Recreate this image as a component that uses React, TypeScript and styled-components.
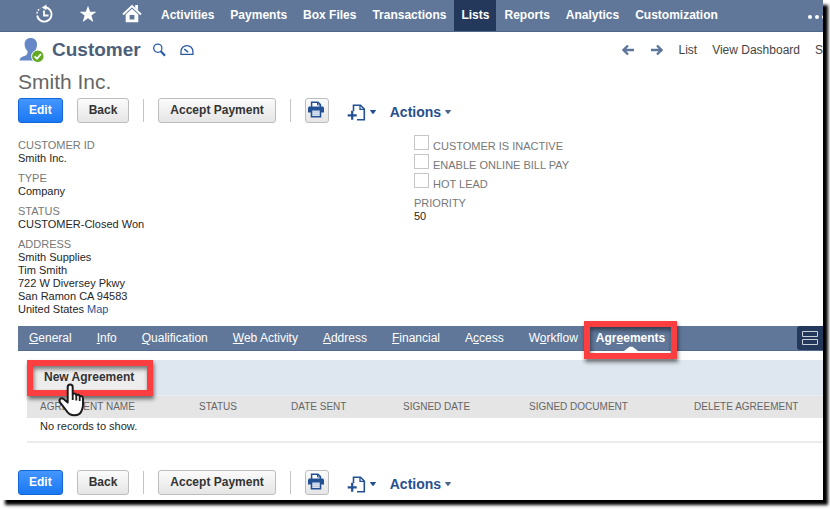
import React from "react";
import styled, { createGlobalStyle } from "styled-components";

const Global = createGlobalStyle`
  * { box-sizing: border-box; }
  body {
    margin: 0;
    background: #fff;
    font-family: "Liberation Sans", Arial, sans-serif;
    font-size: 11px;
    line-height: 13px;
    color: #262626;
  }
  button { font-family: inherit; cursor: pointer; }
  a { text-decoration: none; }
`;

const Window = styled.div`
  margin: 0 7px 9px 0;
  padding-bottom: 5px;
  background: #fff;
  box-shadow: 5px 5px 3px #000;
`;

const TopNav = styled.nav`
  display: flex;
  align-items: stretch;
  gap: 2px;
  height: 32px;
  overflow: hidden;
  background: #607799;
  border-bottom: 1px solid #4e678d;
`;

const NavIcons = styled.div`
  display: flex;
  align-items: center;
  gap: 24px;
  padding: 0 10px 4px 34px;
`;

const IconLink = styled.a`
  display: flex;
  color: #fff;
`;

const NavLink = styled.a<{ $active?: boolean }>`
  margin: 0 ${(p) => (p.$active ? "-1px" : "0")};
  padding: 8px 7px 0;
  font-size: 12px;
  line-height: 15px;
  font-weight: bold;
  white-space: nowrap;
  color: #fff;
  background: ${(p) => (p.$active ? "#24385b" : "transparent")};
`;

const MoreButton = styled.button`
  display: flex;
  align-items: center;
  margin-left: auto;
  padding: 2px 0 0;
  border: 0;
  background: none;
`;

const TitleRow = styled.header`
  display: flex;
  align-items: center;
  height: 36px;
  padding-left: 18px;
`;

const Title = styled.h1`
  margin: 0 12px 0 8px;
  font-size: 19px;
  line-height: 24px;
  color: #4d5f79;
`;

const TitleTools = styled.div`
  display: flex;
  align-items: center;
  gap: 14px;
`;

const PageLinks = styled.div`
  display: flex;
  align-items: center;
  gap: 15px;
  margin-left: auto;
  font-size: 12px;
  line-height: 14px;
  white-space: nowrap;
`;

const Pager = styled.div`
  display: flex;
  gap: 17px;
`;

const PageLink = styled.a`
  color: #444;
`;

const RecordName = styled.h2`
  margin: 0;
  padding: 2px 18px 4px;
  font-size: 21px;
  line-height: 24px;
  font-weight: normal;
  color: #666;
`;

const Toolbar = styled.div`
  display: flex;
  align-items: center;
  gap: 14px;
  height: 25px;
  padding-left: 18px;
`;

const Button = styled.button<{ $primary?: boolean }>`
  height: 25px;
  padding: 0 ${(p) => (p.$primary ? "10px" : "11px")};
  border: 1px solid ${(p) => (p.$primary ? "#1465d6" : "#bdbdbd")};
  border-radius: 3px;
  font-size: 12px;
  line-height: 15px;
  font-weight: bold;
  white-space: nowrap;
  color: ${(p) => (p.$primary ? "#fff" : "#333")};
  background: ${(p) =>
    p.$primary
      ? "linear-gradient(#4496ff, #1a78f2)"
      : "linear-gradient(#fbfbfb, #e5e5e5)"};
`;

const IconButton = styled(Button)`
  display: flex;
  align-items: center;
  justify-content: center;
  width: 24px;
  padding: 0 2px 2px 0;
`;

const Separator = styled.span`
  width: 1px;
  height: 23px;
  background: #c4c4c4;
`;

const MenuButton = styled.button`
  display: flex;
  align-items: center;
  gap: 3px;
  padding: 3px 0 0;
  border: 0;
  background: none;
  font-size: 14px;
  line-height: 18px;
  font-weight: bold;
  color: #27508e;
`;

const Details = styled.section`
  display: grid;
  grid-template-columns: 1fr 1fr;
  padding: 16px 13px 10px 18px;
`;

const FieldList = styled.dl`
  display: flex;
  flex-direction: column;
  gap: 7px;
  margin: 0;
`;

const FieldLabel = styled.dt`
  color: #777;
`;

const FieldValue = styled.dd`
  margin: 0;
`;

const MapLink = styled.a`
  color: #255599;
`;

const CheckList = styled.div`
  margin: -4px 0 5px;
`;

const CheckLabel = styled.label`
  display: flex;
  align-items: flex-start;
  gap: 4px;
  height: 19px;
  color: #777;

  span {
    padding-top: 5px;
  }
`;

const CheckBox = styled.input`
  appearance: none;
  width: 15px;
  height: 15px;
  margin: 0;
  border: 1px solid #c6c6c6;
  background: #fff;
`;

const TabBar = styled.div`
  display: flex;
  align-items: stretch;
  gap: 3px;
  height: 25px;
  margin-left: 18px;
  background: #607799;
  border-bottom: 1px solid #506a90;
`;

const Tab = styled.button<{ $active?: boolean }>`
  position: relative;
  margin-left: ${(p) => (p.$active ? "-7px" : "0")};
  padding: 0 11px;
  border: 0;
  background: none;
  font-size: 12px;
  line-height: 14px;
  font-weight: ${(p) => (p.$active ? "bold" : "normal")};
  white-space: nowrap;
  color: #fff;
`;

const Pointer = styled.svg`
  position: absolute;
  bottom: -1px;
  left: 50%;
  margin-left: -7px;
`;

const Callout = styled.span<{ $inset: string }>`
  position: absolute;
  inset: ${(p) => p.$inset};
  border: 6px solid #fb3f40;
  box-shadow: 1px 3px 4px rgba(0, 0, 0, 0.55), inset 1px 3px 4px rgba(0, 0, 0, 0.5);
  pointer-events: none;
  z-index: 1;
`;

const ViewToggle = styled.button`
  display: flex;
  align-items: center;
  justify-content: center;
  width: 26px;
  height: 24px;
  margin-left: auto;
  padding: 0 0 2px;
  border: 0;
  border-radius: 3px 0 0 3px;
  background: #24385b;
`;

const Panel = styled.section`
  margin: 9px 0 27px 27px;
`;

const PanelBar = styled.div`
  display: flex;
  align-items: center;
  height: 36px;
  padding: 0 6px;
  background: #dee6ef;
  border-bottom: 1px solid #e9edf2;
`;

const NewButton = styled.button`
  position: relative;
  height: 24px;
  padding: 0 13px 0 11px;
  border: 0;
  background: #ededed;
  font-size: 12px;
  line-height: 15px;
  font-weight: bold;
  white-space: nowrap;
  color: #333;
`;

const HandCursor = styled.svg`
  position: absolute;
  left: 24px;
  top: 16px;
  z-index: 2;
`;

const Records = styled.table`
  width: 100%;
  border-collapse: collapse;
  table-layout: fixed;
`;

const HeadCell = styled.th<{ $width?: number }>`
  width: ${(p) => (p.$width ? `${p.$width}px` : "auto")};
  height: 22px;
  padding: 0 0 0 13px;
  background: #e5e5e5;
  font-size: 10px;
  line-height: 12px;
  font-weight: normal;
  text-align: left;
  white-space: nowrap;
  color: #666;
`;

const Cell = styled.td`
  height: 24px;
  padding: 0 0 6px 13px;
  border-bottom: 2px solid #ececec;
`;

const svgProps = { fill: "none", "aria-hidden": true } as const;

const HistoryIcon = () => (
  <svg width="20" height="20" viewBox="0 0 20 20" {...svgProps} stroke="#fff">
    <path d="M3.200 11.500A7.200 7.200 0 1 0 11.500 3.300" strokeWidth="1.900" />
    <path d="M2.900 9.500A7.200 7.200 0 0 1 6.500 4.300" strokeWidth="1.500" strokeDasharray="1.700 1.400" />
    <path d="M7.800 3.400L12.400 .4V6.300Z" fill="#fff" stroke="none" />
    <path d="M10 6.500V11.500H14.500" strokeWidth="1.800" />
  </svg>
);

const StarIcon = () => (
  <svg width="20" height="20" viewBox="0 0 20 20" {...svgProps}>
    <path d="M10 1.800L12.200 7.800H18.400L13.400 11.600L15.300 18L10 14.200L4.700 18L6.600 11.600L1.600 7.800H7.800Z" fill="#fff" />
  </svg>
);

const HomeIcon = () => (
  <svg width="20" height="20" viewBox="0 0 20 20" {...svgProps}>
    <path d="M1 10.500L10 2L19 10.500" stroke="#fff" strokeWidth="1.900" />
    <path d="M13.200 1H16V6.300L13.200 3.700Z" fill="#fff" />
    <path d="M3.700 10.600L10 4.800L16.300 10.600V18.300H3.700Z M7.600 11V15.400H12.400V11Z" fill="#fff" fillRule="evenodd" />
  </svg>
);

const MoreIcon = () => (
  <svg width="16" height="6" viewBox="0 0 16 6" {...svgProps}>
    <g fill="#fff">
      <circle cx="3" cy="3" r="2" />
      <circle cx="10" cy="3" r="2" />
      <circle cx="17" cy="3" r="2" />
    </g>
  </svg>
);

const CustomerIcon = () => (
  <svg width="26" height="26" viewBox="0 0 26 26" {...svgProps}>
    <path
      d="M12.600 1C8.800 1 6.600 3.600 6.600 7.200C6.600 10 7.800 12.500 9.600 14.200C9.500 17.500 8.500 18.300 5.500 19.200C3 20 1.800 21.200 1.500 23.500H20L16.500 15C18 13 19 10 19 7.200C19 3.600 16.500 1 12.600 1Z"
      fill="#6688c6"
    />
    <circle cx="19.800" cy="19.300" r="6.200" fill="#62aa24" stroke="#fff" strokeWidth="1" />
    <path d="M16.600 19.400L19 21.700L23 17" stroke="#fff" strokeWidth="1.800" />
  </svg>
);

const SearchIcon = () => (
  <svg width="13" height="14" viewBox="0 0 13 14" {...svgProps} stroke="#2b5ba6">
    <circle cx="4.800" cy="5.200" r="4.100" strokeWidth="1.300" />
    <path d="M7.800 8.200L12 12.700" strokeWidth="2.200" />
  </svg>
);

const GaugeIcon = () => (
  <svg width="14" height="12" viewBox="0 0 14 12" {...svgProps} stroke="#2b5ba6" strokeWidth="1.300">
    <path d="M1 10.300V7.300A5.900 5.700 0 0 1 12.900 7.300V10.300Z" />
    <path d="M8 8.200L4.300 5" strokeWidth="1.600" />
  </svg>
);

const ArrowIcon = ({ right }: { right?: boolean }) => (
  <svg width="12" height="12" viewBox="0 0 12 12" {...svgProps} stroke="#5d7699" strokeWidth="2.400">
    <path d={right ? "M0 6H10.500M6 1.500L10.500 6L6 10.500" : "M12 6H1.500M6 1.500L1.500 6L6 10.500"} />
  </svg>
);

const PrintIcon = () => (
  <svg width="18" height="17" viewBox="0 0 18 17" {...svgProps}>
    <path d="M4.600 6V1.200H11L13.400 3.600V6" fill="#fff" stroke="#225093" strokeWidth="1.500" />
    <path d="M10.500 1.200V4H13.400" stroke="#225093" />
    <path d="M2 5.500H16L17 6.500V11.500H1V6.500Z" fill="#225093" />
    <path d="M4.500 8.600H13.500V15.800H4.500Z" fill="#dce6f3" stroke="#225093" strokeWidth="1.600" />
    <path d="M6 11H12M6 13.300H12" stroke="#b6c5dc" />
  </svg>
);

const NewFileIcon = () => (
  <svg width="19" height="17" viewBox="0 0 19 17" {...svgProps} stroke="#225093">
    <path d="M6.500 7V1.200H13.500L17.300 5V15.700H10" strokeWidth="1.600" />
    <path d="M13 1.500V5.400H17" strokeWidth="1.300" />
    <path d="M5.200 6.800V15.800M.7 11.300H9.700" strokeWidth="2.200" />
  </svg>
);

const Caret = ({ color = "#225093" }: { color?: string }) => (
  <svg width="8" height="6" viewBox="0 0 8 6" {...svgProps}>
    <path d="M.8 1H7.200L4.600 4.800H3.400Z" fill={color} />
  </svg>
);

const RowsIcon = () => (
  <svg width="16" height="15" viewBox="0 0 16 15" {...svgProps} stroke="#c9cfd8">
    <path d="M.5 1.500H15.500V6.500H.5ZM.5 9.500H15.500V14.500H.5Z" />
  </svg>
);

const MenuRow = styled.div`
  display: flex;
  align-items: center;
  gap: 13px;
  padding-left: 4px;
`;

const RecordToolbar = () => (
  <Toolbar>
    <Button $primary>Edit</Button>
    <Button>Back</Button>
    <Separator />
    <Button>Accept Payment</Button>
    <Separator />
    <IconButton aria-label="Print">
      <PrintIcon />
    </IconButton>
    <MenuRow>
      <MenuButton aria-label="New record">
        <NewFileIcon />
        <Caret />
      </MenuButton>
      <MenuButton>
        Actions <Caret color="#4d6587" />
      </MenuButton>
    </MenuRow>
  </Toolbar>
);

const navItems = [
  "Activities",
  "Payments",
  "Box Files",
  "Transactions",
  "Lists",
  "Reports",
  "Analytics",
  "Customization",
];

const fields: [string, string][] = [
  ["CUSTOMER ID", "Smith Inc."],
  ["TYPE", "Company"],
  ["STATUS", "CUSTOMER-Closed Won"],
];

const address = ["Smith Supplies", "Tim Smith", "722 W Diversey Pkwy", "San Ramon CA 94583"];

const flags = ["CUSTOMER IS INACTIVE", "ENABLE ONLINE BILL PAY", "HOT LEAD"];

/* Each tab is split around its underlined access key. */
const tabs: [string, string, string][] = [
  ["", "G", "eneral"],
  ["", "I", "nfo"],
  ["", "Q", "ualification"],
  ["", "W", "eb Activity"],
  ["", "A", "ddress"],
  ["", "F", "inancial"],
  ["A", "c", "cess"],
  ["W", "o", "rkflow"],
  ["Agr", "e", "ements"],
];

const columns: [string, number?][] = [
  ["AGREEMENT NAME", 159],
  ["STATUS", 92],
  ["DATE SENT", 112],
  ["SIGNED DATE", 126],
  ["SIGNED DOCUMENT", 165],
  ["DELETE AGREEMENT"],
];

export default function App() {
  return (
    <>
      <Global />
      <Window>
        <TopNav>
          <NavIcons>
            <IconLink href="#" aria-label="Recent records"><HistoryIcon /></IconLink>
            <IconLink href="#" aria-label="Shortcuts"><StarIcon /></IconLink>
            <IconLink href="#" aria-label="Home"><HomeIcon /></IconLink>
          </NavIcons>
          {navItems.map((item) => (
            <NavLink href="#" key={item} $active={item === "Lists"}>{item}</NavLink>
          ))}
          <MoreButton aria-label="More"><MoreIcon /></MoreButton>
        </TopNav>

        <TitleRow>
          <CustomerIcon />
          <Title>Customer</Title>
          <TitleTools>
            <IconLink href="#" aria-label="Search"><SearchIcon /></IconLink>
            <IconLink href="#" aria-label="Dashboard"><GaugeIcon /></IconLink>
          </TitleTools>
          <PageLinks>
            <Pager>
              <IconLink href="#" aria-label="Previous"><ArrowIcon /></IconLink>
              <IconLink href="#" aria-label="Next"><ArrowIcon right /></IconLink>
            </Pager>
            <PageLink href="#">List</PageLink>
            <PageLink href="#">View Dashboard</PageLink>
            <PageLink href="#">S</PageLink>
          </PageLinks>
        </TitleRow>
        <RecordName>Smith Inc.</RecordName>

        <RecordToolbar />

        <Details>
          <FieldList>
            {fields.map(([label, value]) => (
              <div key={label}>
                <FieldLabel>{label}</FieldLabel>
                <FieldValue>{value}</FieldValue>
              </div>
            ))}
            <div>
              <FieldLabel>ADDRESS</FieldLabel>
              {address.map((line) => (
                <FieldValue key={line}>{line}</FieldValue>
              ))}
              <FieldValue>United States <MapLink href="#">Map</MapLink></FieldValue>
            </div>
          </FieldList>
          <div>
            <CheckList>
              {flags.map((flag) => (
                <CheckLabel key={flag}>
                  <CheckBox type="checkbox" />
                  <span>{flag}</span>
                </CheckLabel>
              ))}
            </CheckList>
            <FieldList>
              <div>
                <FieldLabel>PRIORITY</FieldLabel>
                <FieldValue>50</FieldValue>
              </div>
            </FieldList>
          </div>
        </Details>

        <TabBar role="tablist">
          {tabs.map(([before, key, after]) => {
            const active = key === "e";
            return (
              <Tab role="tab" aria-selected={active} $active={active} key={before + key + after}>
                {before}<u>{key}</u>{after}
                {active && (
                  <>
                    <Pointer width="14" height="5" viewBox="0 0 14 5" aria-hidden>
                      <path d="M0 5L5.500 .8H8.500L14 5Z" fill="#fff" />
                    </Pointer>
                    <Callout $inset="-5px -1px -9px" />
                  </>
                )}
              </Tab>
            );
          })}
          <ViewToggle aria-label="Toggle layout"><RowsIcon /></ViewToggle>
        </TabBar>

        <Panel>
          <PanelBar>
            <NewButton>
              New Agreement
              <Callout $inset="-6px" />
              <HandCursor width="30" height="36" viewBox="0 0 30 36" aria-hidden>
                <path
                  d="M13.200 2.500C14.700 2.500 15.700 3.500 15.700 5V12C17.200 11 19 11.600 19.300 13C20.800 12.200 22.300 12.800 22.700 14.300C24.300 13.600 26 14.600 26 16.500V23C26 26 25 27.500 24.300 29.500C23 32 20.500 33.300 17.500 33.300C13.500 33.300 11 31.500 9.300 28.500L3 20.300C1.500 17.500 4 15.300 6.300 16.800L10.700 20.500V5C10.700 3.500 11.700 2.500 13.200 2.500Z"
                  fill="#fff"
                  stroke="#1c1c1c"
                  strokeWidth="2"
                  strokeLinejoin="round"
                />
                <path d="M15.700 12V18M19.300 13V18.500M22.700 14.300V19" stroke="#1c1c1c" strokeWidth="1.800" />
              </HandCursor>
            </NewButton>
          </PanelBar>
          <Records>
            <thead>
              <tr>
                {columns.map(([name, width]) => (
                  <HeadCell key={name} $width={width}>{name}</HeadCell>
                ))}
              </tr>
            </thead>
            <tbody>
              <tr>
                <Cell colSpan={6}>No records to show.</Cell>
              </tr>
            </tbody>
          </Records>
        </Panel>

        <RecordToolbar />
      </Window>
    </>
  );
}
